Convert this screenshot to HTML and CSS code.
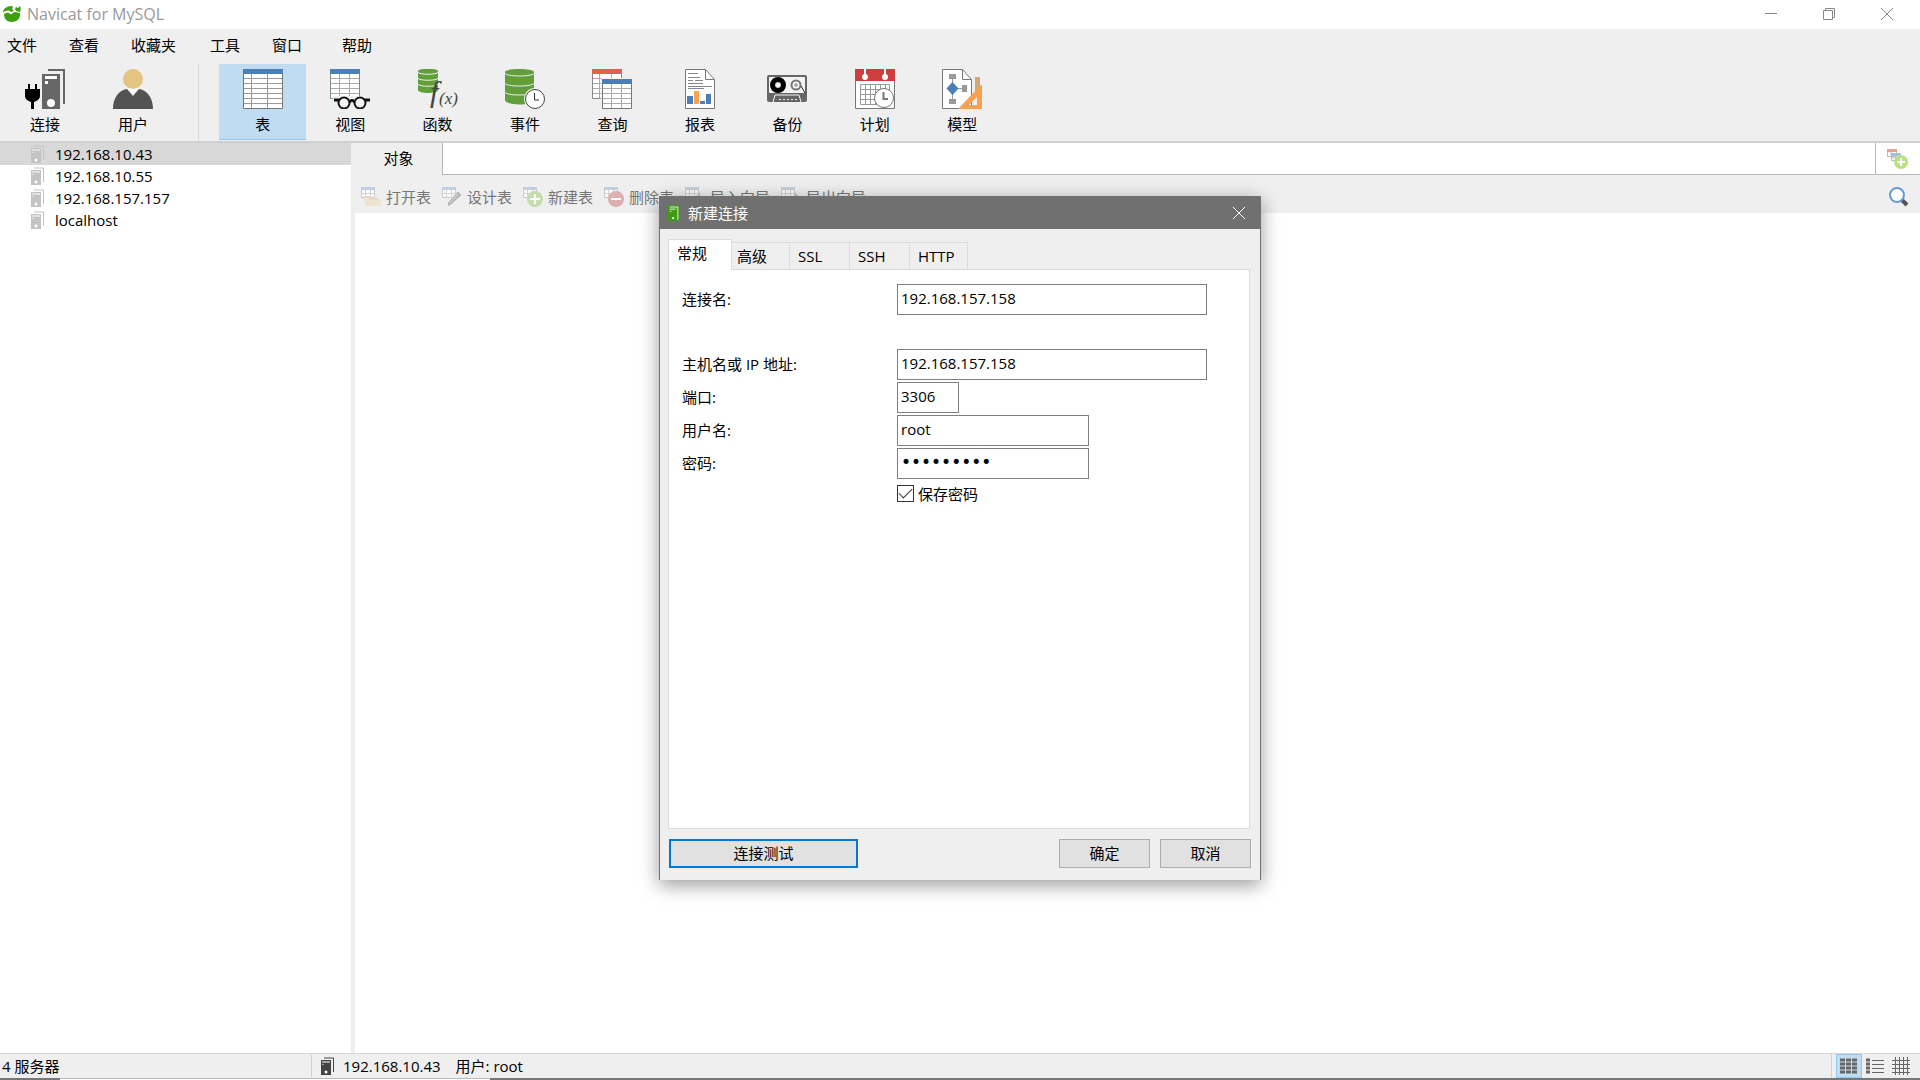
FILE: index.html
```html
<!DOCTYPE html>
<html lang="zh-CN">
<head>
  <meta charset="UTF-8" />
  <meta name="viewport" content="width=device-width, initial-scale=1.0"/>
  <title>Navicat for MySQL</title>
  <link rel="stylesheet" href="styles.css">
</head>
<body>
  <!-- shared icon shapes -->
  <svg class="sprite" aria-hidden="true">
    <symbol id="server" viewBox="0 0 13 18">
      <path d="M3 1h9.500v14" fill="none" stroke="currentColor" stroke-width="1"/>
      <path d="M0 3h10v15H0z" fill="currentColor"/>
      <path d="M1 5h8M1.500 7.500h1" stroke="#fff" stroke-width="1"/>
      <circle cx="5" cy="15" r="1.500" fill="#fff"/>
    </symbol>
    <symbol id="small-table" viewBox="0 0 20 20">
      <path d="M.5.5h13v10H.5z" fill="#fafafa" stroke="#c9cbcd"/>
      <path d="M.5 6.500h13M4.500 3v8M9.500 3v8" stroke="#d4d4d4"/>
      <path d="M0 0h14v3H0z" fill="#c3cfda"/>
    </symbol>
  </svg>

  <header class="titlebar">
    <svg class="logo" viewBox="0 0 18 18">
      <path d="M1 9c2-1 5-2 6 0 2 1 3-2 5-2 2 0 3 1 5 1 1 5-3 9-8 9S1 14 1 9z" fill="#3da10f"/>
      <path d="M0 8c0-4 3-7 9-7l1 1-1 2 2 2-3 1C6 5 3 5 0 8z" fill="#3da10f"/>
      <path d="M13 2l2 1 2-2c1 2 1 4 0 6l-4-1-1-2z" fill="#3da10f"/>
    </svg>
    <h1>Navicat for MySQL</h1>
    <div class="window-buttons">
      <button aria-label="最小化"><svg viewBox="0 0 12 12"><path d="M0 5.500h12"/></svg></button>
      <button aria-label="还原"><svg viewBox="0 0 12 12"><path d="M.5 2.500h9v9h-9zM2.500 2.500v-2h9v9h-2"/></svg></button>
      <button aria-label="关闭"><svg viewBox="0 0 12 12"><path d="M0 0l12 12M12 0L0 12"/></svg></button>
    </div>
  </header>

  <nav class="menu">
    <a href="#">文件</a>
    <a href="#">查看</a>
    <a href="#">收藏夹</a>
    <a href="#">工具</a>
    <a href="#">窗口</a>
    <a href="#">帮助</a>
  </nav>

  <div class="toolbar">
    <div class="tools tools-left">
      <button>
        <svg viewBox="0 0 40 40">
          <path d="M23 1h16v34" fill="none" stroke="#666" stroke-width="2"/>
          <path d="M17 5h18v35H17z" fill="#666"/>
          <path d="M20 7h12v3H20zM20 12h3v3h-3z" fill="#fff"/>
          <circle cx="26" cy="34" r="4" fill="#fff"/>
          <path d="M3 15h2v5h5v-5h2v5h3v7c0 3-3 5-6 6v7H6v-7c-3-1-6-3-6-6v-7h3z"/>
        </svg>
        连接
      </button>
      <button>
        <svg viewBox="0 0 40 40">
          <path d="M0 40c0-10 5-19 14-20l6 7 6-7c9 1 14 10 14 20z" fill="#535353"/>
          <path d="M15 19h10l-5 7z" fill="#fff"/>
          <circle cx="20" cy="10" r="10" fill="#e5c381"/>
        </svg>
        用户
      </button>
    </div>
    <div class="tools tools-main">
      <button class="active">
        <svg viewBox="0 0 40 40">
          <path d="M.5.500h39v39H.5z" fill="#fff" stroke="#777"/>
          <path d="M1 9.500h38M1 14.500h38M1 19.500h38M1 24.500h38M1 29.500h38M1 34.500h38M8.500 5v34M24.500 5v34" stroke="#999"/>
          <path d="M0 0h40v5H0z" fill="#4b7fb8"/>
        </svg>
        表
      </button>
      <button>
        <svg viewBox="0 0 40 40">
          <path d="M.5.500h29v29H.5z" fill="#fff" stroke="#888"/>
          <path d="M1 9.500h28M1 14.500h28M1 19.500h28M1 24.500h28M9.500 5v24M19.500 5v24" stroke="#aaa"/>
          <path d="M0 0h30v5H0z" fill="#4b7fb8"/>
          <path d="M3 27h37v13H3z" fill="#efefef"/>
          <path d="M4 31h6M34 31h6M19 33q3-3 6 0" fill="none" stroke="#111" stroke-width="3"/>
          <g fill="#f4f4f4" stroke="#111" stroke-width="2"><circle cx="14" cy="34" r="5.500"/><circle cx="30" cy="34" r="5.500"/></g>
        </svg>
        视图
      </button>
      <button>
        <svg viewBox="0 0 40 40">
          <path d="M0 2v19c0 4 20 4 20 0V2c0-3-20-3-20 0z" fill="#629f3a"/>
          <path d="M0 3c0 3 20 3 20 0M0 9c0 3 20 3 20 0M0 15c0 3 20 3 20 0" fill="none" stroke="#efefef" stroke-width="1"/>
          <text x="12" y="33" class="fx-big">f</text>
          <text x="21" y="35" class="fx-small">(x)</text>
        </svg>
        函数
      </button>
      <button>
        <svg viewBox="0 0 40 40">
          <path d="M0 3v28c0 6 29 6 29 0V3c0-4-29-4-29 0z" fill="#629f3a"/>
          <path d="M0 4c0 4 29 4 29 0M0 14c0 4 29 4 29 0M0 23c0 4 29 4 29 0" fill="none" stroke="#efefef" stroke-width="1"/>
          <circle cx="30" cy="30" r="11" fill="#efefef"/>
          <circle cx="30" cy="30" r="9.500" fill="#fff" stroke="#444"/>
          <path d="M29.500 24v7H34" fill="none" stroke="#333"/>
        </svg>
        事件
      </button>
      <button>
        <svg viewBox="0 0 40 40">
          <path d="M.5.500h29v29H.5z" fill="#fff" stroke="#888"/>
          <path d="M1 9.500h28M1 14.500h28M1 19.500h28M1 24.500h28M7.500 5v24M19.500 5v5" stroke="#aaa"/>
          <path d="M0 0h30v5H0z" fill="#dc6547"/>
          <path d="M9 9h31v31H9z" fill="#efefef"/>
          <path d="M10.500 10.500h29v29h-29z" fill="#fff" stroke="#777"/>
          <path d="M11 19.500h28M11 24.500h28M11 29.500h28M11 34.500h28M19.500 15v24M29.500 15v24" stroke="#aaa"/>
          <path d="M10 10h30v5H10z" fill="#4b7fb8"/>
        </svg>
        查询
      </button>
      <button>
        <svg viewBox="0 0 40 40">
          <path d="M5.500.500h20l9 10v29h-29z" fill="#fff" stroke="#777"/>
          <path d="M25.500.500v10h9" fill="none" stroke="#777"/>
          <path d="M8 4.500h10M8 8.500h12M8 11.500h5M15 11.500h8M8 14.500h15M8 17.500h24M8 19.500h16" stroke="#888"/>
          <path d="M7 27h6v8H7zM20 32h5v3h-5zM26 25h5v10h-5z" fill="#4b7fb8"/>
          <path d="M14 22h5v13h-5z" fill="#f9a14c"/>
        </svg>
        报表
      </button>
      <button>
        <svg viewBox="0 0 40 40">
          <rect x="0" y="6" width="40" height="27" rx="2" fill="#666"/>
          <rect x="2" y="8" width="36" height="16" rx="1" fill="#f4f4f4"/>
          <circle cx="11" cy="16" r="5.500" fill="#ccc" stroke="#000" stroke-width="5"/>
          <circle cx="11" cy="16" r="2" fill="#fff"/>
          <circle cx="29" cy="16" r="4.500" fill="#fff" stroke="#777" stroke-width="2"/>
          <circle cx="29" cy="16" r="2" fill="#aaa"/>
          <path d="M34 17l4 7" stroke="#222"/>
          <path d="M6 33l2-7h24l2 7" fill="#666" stroke="#f4f4f4"/>
          <path d="M12 30.500h18" stroke="#eee" stroke-width="1" stroke-dasharray="2 2"/>
        </svg>
        备份
      </button>
      <button>
        <svg viewBox="0 0 40 40">
          <path d="M.5.500h39v39H.5z" fill="#fff" stroke="#777"/>
          <path d="M0 0h40v12H0z" fill="#cf3e3e"/>
          <path d="M10 0v6M30 0v6" stroke="#fff" stroke-width="2"/>
          <circle cx="10" cy="8" r="3" fill="#fff"/><circle cx="30" cy="8" r="3" fill="#fff"/>
          <path d="M5.500 15.500h29v20h-29zM5 20.500h30M5 25.500h30M5 30.500h30M10.500 15v20M15.500 15v20M20.500 15v20M25.500 15v20M30.500 15v20" fill="none" stroke="#999"/>
          <circle cx="29" cy="29" r="9.500" fill="#fff" stroke="#777"/>
          <path d="M28.500 23v7H33" fill="none" stroke="#777" stroke-width="2"/>
        </svg>
        计划
      </button>
      <button>
        <svg viewBox="0 0 40 40">
          <path d="M.5.500h20l9 10v29H.5z" fill="#fff" stroke="#777"/>
          <path d="M20.500.500v10h9" fill="none" stroke="#777"/>
          <path d="M10.500 8v24M10 19.500h12" stroke="#999"/>
          <path d="M7 5h7v5H7zM7 30h7v5H7zM20 16h5v7h-5z" fill="#999"/>
          <path d="M10.500 13l6 6.500-6 6.500-6-6.500z" fill="#4b7fb8"/>
          <path d="M33 8h5v18h-5z" fill="#cfa873"/>
          <path d="M40 15v25H16zM35 28l-8 8h8z" fill="#f9a14c" fill-rule="evenodd"/>
        </svg>
        模型
      </button>
    </div>
  </div>

  <main class="workspace">
    <aside class="connections">
      <ul>
        <li class="selected"><svg><use href="#server"/></svg>192.168.10.43</li>
        <li><svg><use href="#server"/></svg>192.168.10.55</li>
        <li><svg><use href="#server"/></svg>192.168.157.157</li>
        <li><svg><use href="#server"/></svg>localhost</li>
      </ul>
    </aside>

    <section class="objects">
      <div class="tabbar">
        <button class="tab">对象</button>
        <button class="new-query" aria-label="新建查询">
          <svg viewBox="0 0 21 20">
            <path d="M.5.500h9v7h-9zM4.500 4.500h9v7h-9zM4 3v5M9 7v4M5 9h8" fill="#fff" stroke="#bbb"/>
            <path d="M0 0h10v3H0z" fill="#eca193"/><path d="M4 4h10v3H4z" fill="#a5c0dc"/>
            <circle cx="14" cy="13" r="7" fill="#bce27f"/>
            <path d="M14 9v8M10 13h8" stroke="#fff" stroke-width="2"/>
          </svg>
        </button>
      </div>
      <div class="actions">
        <button disabled>
          <svg viewBox="0 0 20 20"><use href="#small-table"/><path d="M3 9h6l2 2h7v8H5z" fill="#e7dcc3"/><path d="M2 11h4l2 2h12v6H7z" fill="#eee4cf"/></svg>
          打开表
        </button>
        <button disabled>
          <svg viewBox="0 0 20 20"><use href="#small-table"/><path d="M5 20l1-5L16 4l4 4L9 18z" fill="#b5b5b5" stroke="#efefef"/><path d="M8 16l8-9" stroke="#e3e3e3"/></svg>
          设计表
        </button>
        <button disabled>
          <svg viewBox="0 0 20 20"><use href="#small-table"/><circle cx="12" cy="12" r="8" fill="#c6dcae"/><path d="M12 7v10M7 12h10" stroke="#fff" stroke-width="2"/></svg>
          新建表
        </button>
        <button disabled>
          <svg viewBox="0 0 20 20"><use href="#small-table"/><circle cx="12" cy="12" r="8" fill="#dcb0b0"/><path d="M7 12h10" stroke="#fff" stroke-width="2"/></svg>
          删除表
        </button>
        <button disabled>
          <svg viewBox="0 0 20 20"><use href="#small-table"/><path d="M9 12l6-7v4h5v6h-5v4z" fill="#b3cf9c"/></svg>
          导入向导
        </button>
        <button disabled>
          <svg viewBox="0 0 20 20"><use href="#small-table"/><path d="M20 12l-6-7v4H9v6h5v4z" fill="#e3bf9f"/></svg>
          导出向导
        </button>
        <button class="search" aria-label="搜索">
          <svg viewBox="0 0 20 20">
            <path d="M13 13l5 5" stroke="#555" stroke-width="4"/>
            <circle cx="8" cy="8" r="7" fill="#fff" stroke="#6a9bd0" stroke-width="2"/>
          </svg>
        </button>
      </div>
    </section>
  </main>

  <footer class="statusbar">
    <span class="count">4 服务器</span>
    <svg class="status-icon"><use href="#server"/></svg>
    <span>192.168.10.43</span>
    <span class="user">用户: root</span>
    <div class="views">
      <button class="active" aria-label="列表"><svg viewBox="0 0 18 18"><path d="M0 3h5M6 3h5M12 3h5M0 7h5M6 7h5M12 7h5M0 11h5M6 11h5M12 11h5M0 15h5M6 15h5M12 15h5" stroke-width="3"/></svg></button>
      <button aria-label="详细信息"><svg viewBox="0 0 18 18"><path d="M0 3h4M0 7h4M0 11h4M0 15h4" stroke-width="3"/><path d="M6 3.500h12M6 7.500h12M6 11.500h12M6 15.500h12" stroke-width="1"/></svg></button>
      <button aria-label="ER 图表"><svg viewBox="0 0 18 18"><path d="M0 3.500h18M0 7.500h18M0 11.500h18M0 15.500h18M3.500 0v18M7.500 0v18M11.500 0v18M15.500 0v18" stroke-width="1"/></svg></button>
    </div>
  </footer>
  <div class="taskbar-edge"><i></i></div>

  <div class="overlay">
    <form class="dialog">
      <div class="dialog-title">
        <svg viewBox="0 0 14 18"><path d="M0 0h14v18H0z" fill="#3f9c12"/><path d="M2 2h9.500v15" fill="none" stroke="#fff"/><path d="M2 4.500h7M2 7h2" stroke="#fff"/><path d="M5 14h2v2H5z" fill="#fff"/></svg>
        <h2>新建连接</h2>
        <button type="button" aria-label="关闭"><svg viewBox="0 0 12 12"><path d="M0 0l12 12M12 0L0 12" stroke="#fff"/></svg></button>
      </div>
      <div class="dialog-body">
        <div class="dialog-tabs">
          <button type="button" class="active">常规</button>
          <button type="button">高级</button>
          <button type="button">SSL</button>
          <button type="button">SSH</button>
          <button type="button">HTTP</button>
        </div>
        <div class="panel">
          <div class="field spaced">
            <label for="conn-name">连接名:</label>
            <input type="text" id="conn-name" value="192.168.157.158">
          </div>
          <div class="field">
            <label for="host">主机名或 IP 地址:</label>
            <input type="text" id="host" value="192.168.157.158">
          </div>
          <div class="field">
            <label for="port">端口:</label>
            <input type="text" id="port" class="short" value="3306">
          </div>
          <div class="field">
            <label for="user">用户名:</label>
            <input type="text" id="user" class="medium" value="root">
          </div>
          <div class="field">
            <label for="password">密码:</label>
            <input type="password" id="password" class="medium" value="123456789">
          </div>
          <div class="save">
            <input type="checkbox" id="save-password" checked>
            <label for="save-password">保存密码</label>
          </div>
        </div>
        <div class="dialog-buttons">
          <button type="button" class="test">连接测试</button>
          <button type="submit">确定</button>
          <button type="button">取消</button>
        </div>
      </div>
    </form>
  </div>
</body>
</html>
```
FILE: styles.css
```css
* {
  box-sizing: border-box;
}
body {
  margin: 0;
  min-height: 100vh;
  display: flex;
  flex-direction: column;
  background: #efefef;
  color: #000;
  font-family: "Open Sans", "Noto Sans CJK SC", sans-serif;
  font-size: 15px;
  line-height: 22px;
}
button, input {
  font: inherit;
  color: inherit;
}
button {
  background: none;
  border: none;
  padding: 0;
}
svg {
  display: block;
  flex-shrink: 0;
}
.sprite {
  position: absolute;
  width: 0;
  height: 0;
}

/* title bar and menu */
.titlebar {
  display: flex;
  align-items: center;
  height: 29px;
  padding: 0 4px 2px 3px;
  background: #fff;
}
.logo {
  width: 18px;
  height: 18px;
}
h1 {
  margin: 0 0 0 6px;
  font-size: 16px;
  font-weight: normal;
  color: #999;
}
.window-buttons {
  display: flex;
  margin-left: auto;
}
.window-buttons button {
  width: 58px;
  height: 27px;
  display: flex;
  align-items: center;
  justify-content: center;
}
.window-buttons svg {
  width: 12px;
  height: 12px;
  fill: none;
  stroke: #888;
}
.menu {
  display: flex;
  gap: 32px;
  height: 35px;
  padding: 5px 7px;
}
.menu a {
  color: inherit;
  text-decoration: none;
}
.menu a:nth-child(3) {
  margin-right: 2px;
}
.menu a:last-child {
  margin-left: 8px;
}

/* main toolbar */
.toolbar {
  display: flex;
  height: 79px;
  border-bottom: 2px solid #d0d0d0;
}
.tools {
  display: grid;
  height: 76px;
}
.tools-left {
  grid-template-columns: 88px 88px;
  width: 199px;
  padding-left: 1px;
  border-right: 1px solid #d8d8d8;
}
.tools-main {
  grid-template-columns: repeat(9, 1fr);
  width: 787px;
  margin-left: 20px;
}
.tools button {
  display: flex;
  flex-direction: column;
  align-items: center;
  padding-top: 5px;
  gap: 4px;
}
.tools svg {
  width: 40px;
  height: 40px;
}
.tools button.active {
  background: #c0dcf3;
  border-bottom: 1px solid #90c8f6;
}
.fx-big, .fx-small {
  font-family: "Liberation Serif", serif;
  font-style: italic;
  fill: #444;
}
.fx-big {
  font-size: 30px;
}
.fx-small {
  font-size: 17px;
}

/* workspace */
.workspace {
  flex: 1;
  display: flex;
  gap: 4px;
}
.connections {
  width: 351px;
  background: #fff;
}
.connections ul {
  list-style: none;
  margin: 0;
  padding: 0;
}
.connections li {
  display: flex;
  align-items: center;
  gap: 11px;
  height: 22px;
  padding-left: 31px;
}
.connections li.selected {
  background: #d8d8d8;
}
.connections svg {
  width: 13px;
  height: 18px;
  color: #c3c3c3;
}
.objects {
  flex: 1;
  display: flex;
  flex-direction: column;
  background: #fff;
}
.tabbar {
  display: flex;
  justify-content: space-between;
  height: 32px;
  background: #fff;
  border-bottom: 1px solid #b9b9b9;
}
.tab {
  width: 88px;
  height: 32px;
  padding-bottom: 3px;
  background: #efefef;
  border-right: 1px solid #b9b9b9;
}
.new-query {
  width: 45px;
  padding-left: 11px;
  border-left: 1px solid #b9b9b9;
}
.new-query svg {
  width: 21px;
  height: 20px;
}
.actions {
  display: flex;
  gap: 11px;
  height: 38px;
  padding: 5px 11px 0 6px;
  background: #efefef;
}
.actions button {
  display: flex;
  align-items: center;
  gap: 5px;
  color: #777;
}
.actions svg {
  width: 20px;
  height: 20px;
}
.actions .search {
  margin-left: auto;
}

/* status bar */
.statusbar {
  display: flex;
  align-items: center;
  height: 25px;
  border-top: 1px solid #d8d8d8;
}
.count {
  width: 312px;
  padding-left: 2px;
  border-right: 1px solid #d0d0d0;
}
.status-icon {
  width: 13px;
  height: 18px;
  margin: 0 9px;
  color: #444;
}
.user {
  margin-left: 15px;
}
.views {
  display: flex;
  margin-left: auto;
  padding: 0 6px 0 4px;
  border-left: 1px solid #d0d0d0;
}
.views button {
  display: flex;
  align-items: center;
  justify-content: center;
  width: 26px;
  height: 24px;
}
.views .active {
  background: #c0dcf3;
  border: 1px solid #90c8f6;
}
.views svg {
  width: 18px;
  height: 18px;
  stroke: #666;
}
.taskbar-edge {
  height: 2px;
  padding-left: 60px;
  background: #777;
}
.taskbar-edge i {
  display: block;
  width: 430px;
  height: 2px;
  background: #fff;
  border-top: 1px solid #b9b9b9;
}

/* new connection dialog */
.overlay {
  position: absolute;
  inset: 0;
  display: flex;
  align-items: center;
  justify-content: center;
  padding-bottom: 5px;
}
.dialog {
  width: 602px;
  border: 1px solid #707070;
  border-bottom: none;
  background: #efefef;
  box-shadow: 0 5px 18px rgba(0, 0, 0, 0.4);
}
.dialog-title {
  display: flex;
  align-items: center;
  gap: 8px;
  height: 32px;
  padding: 0 15px 0 8px;
  background: #707070;
  color: #fff;
}
.dialog-title > svg {
  width: 12px;
  height: 18px;
}
.dialog-title h2 {
  margin: 0;
  font-size: 15px;
  font-weight: normal;
}
.dialog-title button {
  margin-left: auto;
}
.dialog-title button svg {
  width: 12px;
  height: 12px;
}
.dialog-body {
  padding: 10px 9px 12px 8px;
}
.dialog-tabs {
  display: flex;
  align-items: flex-end;
}
.dialog-tabs button {
  width: 60px;
  height: 27px;
  padding-left: 8px;
  text-align: left;
  border: 1px solid #dcdcdc;
  border-left: none;
  border-bottom: none;
}
.dialog-tabs button:nth-child(2) {
  width: 58px;
  padding-left: 5px;
}
.dialog-tabs button:last-child {
  width: 58px;
}
.dialog-tabs button.active {
  width: 64px;
  height: 31px;
  margin-bottom: -1px;
  padding: 0 0 4px 8px;
  border-left: 1px solid #dcdcdc;
  background: #fff;
  z-index: 1;
}
.panel {
  height: 560px;
  margin-right: 1px;
  padding: 14px 13px;
  background: #fff;
  border: 1px solid #dcdcdc;
}
.field {
  display: flex;
  align-items: center;
  margin-bottom: 2px;
}
.field.spaced {
  margin-bottom: 34px;
}
.field label {
  width: 215px;
}
.field input {
  width: 310px;
  height: 31px;
  padding: 0 3px 3px;
  border: 1px solid #808080;
  background: #fff;
}
.field input.short {
  width: 62px;
}
.field input.medium {
  width: 192px;
}
.field input[type="password"] {
  font-family: "DejaVu Sans", sans-serif;
  font-size: 17px;
}
.save {
  display: flex;
  align-items: center;
  gap: 4px;
  height: 26px;
  margin-left: 215px;
}
.save input {
  appearance: none;
  display: flex;
  align-items: center;
  justify-content: center;
  width: 17px;
  height: 17px;
  margin: 0;
  border: 1px solid #333;
}
.save input:checked::before {
  content: "";
  width: 12px;
  height: 6px;
  margin-bottom: 4px;
  border: solid #333;
  border-width: 0 0 1px 1px;
  transform: rotate(-45deg);
}
.dialog-buttons {
  display: flex;
  gap: 10px;
  margin-top: 10px;
  padding-left: 1px;
}
.dialog-buttons button {
  width: 91px;
  height: 29px;
  padding-bottom: 1px;
  border: 1px solid #adadad;
  background: #e1e1e1;
}
.dialog-buttons .test {
  width: 189px;
  margin-right: auto;
  border: 2px solid #0078d7;
}
```
